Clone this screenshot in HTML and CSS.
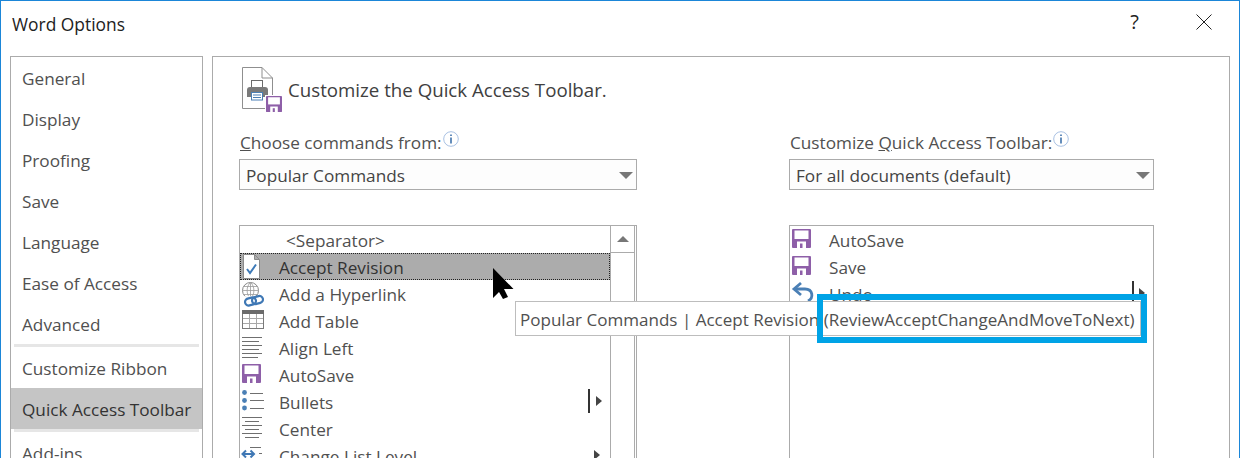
FILE: index.html
```html
<!DOCTYPE html>
<html lang="en">
<head>
  <meta charset="UTF-8" />
  <title>Word Options</title>
  <link rel="stylesheet" href="styles.css">
</head>
<body>
  <svg class="defs" width="0" height="0">
    <symbol id="floppy" viewBox="0 0 19 19">
      <path fill="#8e5fa8" d="M1 0H18A1 1 0 0 1 19 1V18A1 1 0 0 1 18 19H1A1 1 0 0 1 0 18V1A1 1 0 0 1 1 0Z"/>
      <rect x="2.5" y="1.5" width="14" height="8.5" fill="#fff"/>
      <rect x="5" y="12.5" width="9" height="6.5" fill="#fff"/>
      <rect x="8" y="14.5" width="2.5" height="4.5" fill="#8e5fa8"/>
    </symbol>
  </svg>

  <div class="window">
    <header class="titlebar">
      <span class="title">Word Options</span>
      <span class="help">?</span>
      <svg class="close" width="16" height="16" viewBox="0 0 16 16"><path d="M.5.5 15.5 15.5M15.5.5.5 15.5" stroke="#222" fill="none"/></svg>
    </header>

    <div class="content">
      <nav class="sidebar">
        <div class="nav-item">General</div>
        <div class="nav-item">Display</div>
        <div class="nav-item">Proofing</div>
        <div class="nav-item">Save</div>
        <div class="nav-item">Language</div>
        <div class="nav-item">Ease of Access</div>
        <div class="nav-item">Advanced</div>
        <div class="nav-sep"></div>
        <div class="nav-item">Customize Ribbon</div>
        <div class="nav-item active">Quick Access Toolbar</div>
        <div class="nav-sep"></div>
        <div class="nav-item">Add-ins</div>
      </nav>

      <main class="panel">
        <div class="heading">
          <svg width="42" height="47" viewBox="0 0 42 47">
            <path d="M1.500 1.500H21L31.500 12V42.500H1.500Z M21 1.500V12H31.500" fill="#fff" stroke="#8f8f8f"/>
            <rect x="10.500" y="14.500" width="11" height="7" fill="#fff" stroke="#6b6b6b"/>
            <path d="M6 24A3 3 0 0 1 9 21H24A3 3 0 0 1 27 24V31H6Z" fill="#7a7a7a"/>
            <rect x="10.500" y="26.500" width="11" height="7.500" fill="#fff" stroke="#4a7fb5"/>
            <path d="M12 29H20M12 31.500H20" stroke="#4a7fb5"/>
            <rect x="24" y="29" width="18" height="18" fill="#fff"/>
            <use href="#floppy" x="25" y="30" width="16" height="16"/>
          </svg>
          <span>Customize the Quick Access Toolbar.</span>
        </div>

        <div class="columns">
          <section class="col col-left">
            <div class="label"><span><u>C</u>hoose commands from:</span>
              <svg class="info" width="16" height="16" viewBox="0 0 16 16"><circle cx="8" cy="8" r="7.300" fill="#fff" stroke="#a9c1e3"/><path d="M8 3.500V5M8 6.500V12.500" stroke="#3f72ab" stroke-width="1.600"/></svg>
            </div>
            <div class="select">Popular Commands<i class="caret"></i></div>
            <div class="list">
              <div class="rows">
                <div class="row sep-row"><span>&lt;Separator&gt;</span></div>
                <div class="row selected">
                  <svg class="icon" width="24" height="27" viewBox="0 0 24 27"><path d="M2.500 1.500H13.500L18.500 6.500V25.500H2.500Z M13.500 1.500V6.500H18.500" fill="#fff" stroke="#8a8a8a"/><path d="M6 16 9 20 15 11.500" fill="none" stroke="#3d7ab8" stroke-width="2"/></svg>
                  <span>Accept Revision</span>
                </div>
                <div class="row">
                  <svg class="icon" width="24" height="27" viewBox="0 0 24 27"><circle cx="9.500" cy="10.500" r="8" fill="#fff" stroke="#8a8a8a"/><path d="M1.500 10.500H17.500M2.500 6.500H16.500M2.500 14.500H16.500M9.500 2.500V18.500M9.500 2.500C5 6 5 15 9.500 18.500M9.500 2.500C14 6 14 15 9.500 18.500" fill="none" stroke="#9a9a9a" stroke-width=".8"/><rect x="3" y="16" width="20" height="10" fill="#fff" opacity=".8"/><rect x="4" y="18" width="11" height="7" rx="3.500" fill="none" stroke="#3f78b5" stroke-width="2.200" transform="rotate(-15 9.500 21.500)"/><rect x="11" y="16.500" width="11" height="7" rx="3.500" fill="none" stroke="#3f78b5" stroke-width="2.200" transform="rotate(-15 16.500 20)"/></svg>
                  <span>Add a Hyperlink</span>
                </div>
                <div class="row">
                  <svg class="icon" width="24" height="27" viewBox="0 0 24 27"><rect x="1.500" y="4.500" width="21" height="17" fill="#fff" stroke="#7a7a7a"/><rect x="1" y="3" width="22" height="4" fill="#6b6b6b"/><path d="M8.500 7V21M15.500 7V21M2 11.500H22M2 16.500H22" stroke="#a8a8a8"/></svg>
                  <span>Add Table</span>
                </div>
                <div class="row">
                  <svg class="icon" width="24" height="27" viewBox="0 0 24 27"><path d="M1 3.500H21M1 7.500H18M1 11.500H21M1 15.500H18M1 19.500H21M1 23.500H17" stroke="#6f6f6f"/></svg>
                  <span>Align Left</span>
                </div>
                <div class="row">
                  <svg class="icon" width="24" height="27" viewBox="0 0 24 27"><use href="#floppy" x="1" y="3" width="19" height="19"/></svg>
                  <span>AutoSave</span>
                </div>
                <div class="row">
                  <svg class="icon" width="24" height="27" viewBox="0 0 24 27"><path d="M9 5.500H22M9 12.500H23M9 20.500H23" stroke="#6f6f6f"/><circle cx="3.500" cy="4.500" r="2.400" fill="#4a7fb5"/><circle cx="3.500" cy="12.500" r="2.400" fill="#4a7fb5"/><circle cx="3.500" cy="20" r="2.400" fill="#4a7fb5"/></svg>
                  <span>Bullets</span>
                  <i class="split split-left"></i><i class="arrow arrow-left"></i>
                </div>
                <div class="row">
                  <svg class="icon" width="24" height="27" viewBox="0 0 24 27"><path d="M1 2.500H21M4 6.500H18M1 10.500H21M4 14.500H18M1 18.500H21M4 22.500H18" stroke="#6f6f6f"/></svg>
                  <span>Center</span>
                </div>
                <div class="row">
                  <svg class="icon" width="24" height="27" viewBox="0 0 24 27"><path d="M9 5.500H20M18 11.500H21" stroke="#6f6f6f"/><path d="M5 8.500 1.500 12 5 15.500M9.500 8.500 13 12 9.500 15.500M2 12H12.500" fill="none" stroke="#3f78b5" stroke-width="2"/></svg>
                  <span>Change List Level</span>
                  <i class="arrow arrow-level"></i>
                </div>
              </div>
              <div class="scrollbar"><div class="scroll-up"><i></i></div></div>
            </div>
          </section>

          <section class="col col-right">
            <div class="label"><span>Customize <u>Q</u>uick Access Toolbar:</span>
              <svg class="info" width="16" height="16" viewBox="0 0 16 16"><circle cx="8" cy="8" r="7.300" fill="#fff" stroke="#a9c1e3"/><path d="M8 3.500V5M8 6.500V12.500" stroke="#3f72ab" stroke-width="1.600"/></svg>
            </div>
            <div class="select">For all documents (default)<i class="caret"></i></div>
            <div class="list">
              <div class="rows">
                <div class="row">
                  <svg class="icon" width="24" height="27" viewBox="0 0 24 27"><use href="#floppy" x="1" y="3" width="19" height="19"/></svg>
                  <span>AutoSave</span>
                </div>
                <div class="row">
                  <svg class="icon" width="24" height="27" viewBox="0 0 24 27"><use href="#floppy" x="1" y="3" width="19" height="19"/></svg>
                  <span>Save</span>
                </div>
                <div class="row">
                  <svg class="icon" width="24" height="27" viewBox="0 0 24 27"><path d="M4 9H14C22 9 23 18 17 21" fill="none" stroke="#4a7fb5" stroke-width="2.800"/><path d="M10 3 3 9 10 15" fill="none" stroke="#4a7fb5" stroke-width="2.800"/></svg>
                  <span>Undo</span>
                  <i class="split split-right"></i><i class="arrow arrow-right"></i>
                </div>
              </div>
            </div>
          </section>
        </div>
      </main>
    </div>
  </div>

  <svg class="cursor" width="21" height="32" viewBox="0 0 21 32"><path d="M0 0V30L6 24 10 31 15 29 11 21H20.500Z" fill="#000"/></svg>
  <div class="tooltip">Popular Commands | Accept Revision (ReviewAcceptChangeAndMoveToNext)</div>
  <div class="callout"></div>
</body>
</html>
```

FILE: styles.css
```css
html, body {
  margin: 0;
  height: 458px;
  overflow: hidden;
  background-color: #fff;
}

body {
  position: relative;
  font-family: "Open Sans", "Noto Sans", sans-serif;
  font-size: 17.2px;
  color: #505050;
}

.defs {
  position: absolute;
}

.window {
  height: 458px;
  overflow: hidden;
  border: 1px solid #1b86d8;
  border-bottom: none;
  box-sizing: border-box;
}

.titlebar {
  display: flex;
  align-items: center;
  height: 55px;
  padding: 0 27px 9px 11px;
  box-sizing: border-box;
  color: #222;
}

.title {
  flex: 1;
  font-size: 17.4px;
}

.help {
  font-size: 20px;
  margin-right: 57px;
  margin-bottom: 5px;
}

.close {
  margin-bottom: 5px;
}

.content {
  display: flex;
  gap: 9px;
  padding: 0 9px;
}

.sidebar {
  width: 193px;
  height: 440px;
  flex: none;
  box-sizing: border-box;
  border: 1px solid #ababab;
}

.nav-item {
  height: 41px;
  line-height: 43px;
  padding-left: 11px;
  white-space: nowrap;
}

.nav-item.active {
  background-color: #c5c5c5;
  color: #333;
}

.nav-sep {
  height: 3px;
  margin: 0 3px;
  background-color: #e6e6e6;
}

.panel {
  flex: 1;
  height: 440px;
  box-sizing: border-box;
  border: 1px solid #ababab;
  padding: 9px 0 0 26px;
}

.heading {
  display: flex;
  align-items: center;
  gap: 5px;
  margin-left: 2px;
  height: 47px;
  font-size: 18.700px;
  color: #404040;
}

.columns {
  display: flex;
  gap: 152px;
  margin-top: 18px;
}

.col-left {
  width: 398px;
}

.col-right {
  width: 365px;
}

.label {
  display: flex;
  align-items: flex-start;
  height: 28px;
  line-height: 24px;
  padding-left: 1px;
}

.info {
  margin-left: 1px;
}

.select {
  display: flex;
  align-items: center;
  justify-content: space-between;
  height: 31px;
  box-sizing: border-box;
  border: 1px solid #ababab;
  padding: 1px 3px 0 6px;
  background-color: #fdfdfd;
  color: #444;
}

.caret {
  width: 0;
  height: 0;
  border-left: 7px solid transparent;
  border-right: 7px solid transparent;
  border-top: 7px solid #777;
}

.list {
  display: flex;
  height: 300px;
  margin-top: 35px;
  box-sizing: border-box;
  border: 1px solid #ababab;
}

.rows {
  flex: 1;
  min-width: 0;
}

.row {
  display: flex;
  align-items: center;
  position: relative;
  height: 27px;
  box-sizing: border-box;
  padding-left: 1px;
  white-space: nowrap;
}

.row span {
  margin-top: 2px;
}

.row .icon {
  flex: none;
  margin-right: 14px;
}

.sep-row {
  padding-left: 46px;
}

.selected {
  background-color: #acacac;
  outline: 1px dotted #222;
  outline-offset: -1px;
  color: #333;
}

.scrollbar {
  width: 25px;
  flex: none;
  margin-right: 1px;
  box-sizing: border-box;
  border-left: 1px solid #ababab;
  border-right: 1px solid #ababab;
}

.scroll-up {
  display: flex;
  align-items: center;
  justify-content: center;
  height: 27px;
  box-sizing: border-box;
  border-bottom: 1px solid #ababab;
}

.scroll-up i {
  width: 0;
  height: 0;
  border-left: 6px solid transparent;
  border-right: 6px solid transparent;
  border-bottom: 6px solid #777;
}

.split {
  position: absolute;
  top: 1px;
  width: 2px;
  height: 24px;
  background-color: #333;
}

.split-left {
  left: 348px;
}

.split-right {
  left: 342px;
}

.arrow {
  position: absolute;
  top: 8px;
  width: 0;
  height: 0;
  border-top: 5px solid transparent;
  border-bottom: 5px solid transparent;
  border-left: 6px solid #444;
}

.arrow-left {
  left: 356px;
}

.arrow-right {
  left: 349px;
}

.arrow-level {
  left: 354px;
}

.cursor {
  position: absolute;
  left: 493px;
  top: 268px;
}

.tooltip {
  position: absolute;
  left: 515px;
  top: 301px;
  width: 626px;
  height: 35px;
  box-sizing: border-box;
  border: 1px solid #bdbdbd;
  padding-left: 4px;
  line-height: 35px;
  font-size: 17.050px;
  background-color: #fff;
  white-space: nowrap;
}

.callout {
  position: absolute;
  left: 817px;
  top: 294px;
  width: 330px;
  height: 49px;
  box-sizing: border-box;
  border: 6px solid #00a3e6;
}
```
